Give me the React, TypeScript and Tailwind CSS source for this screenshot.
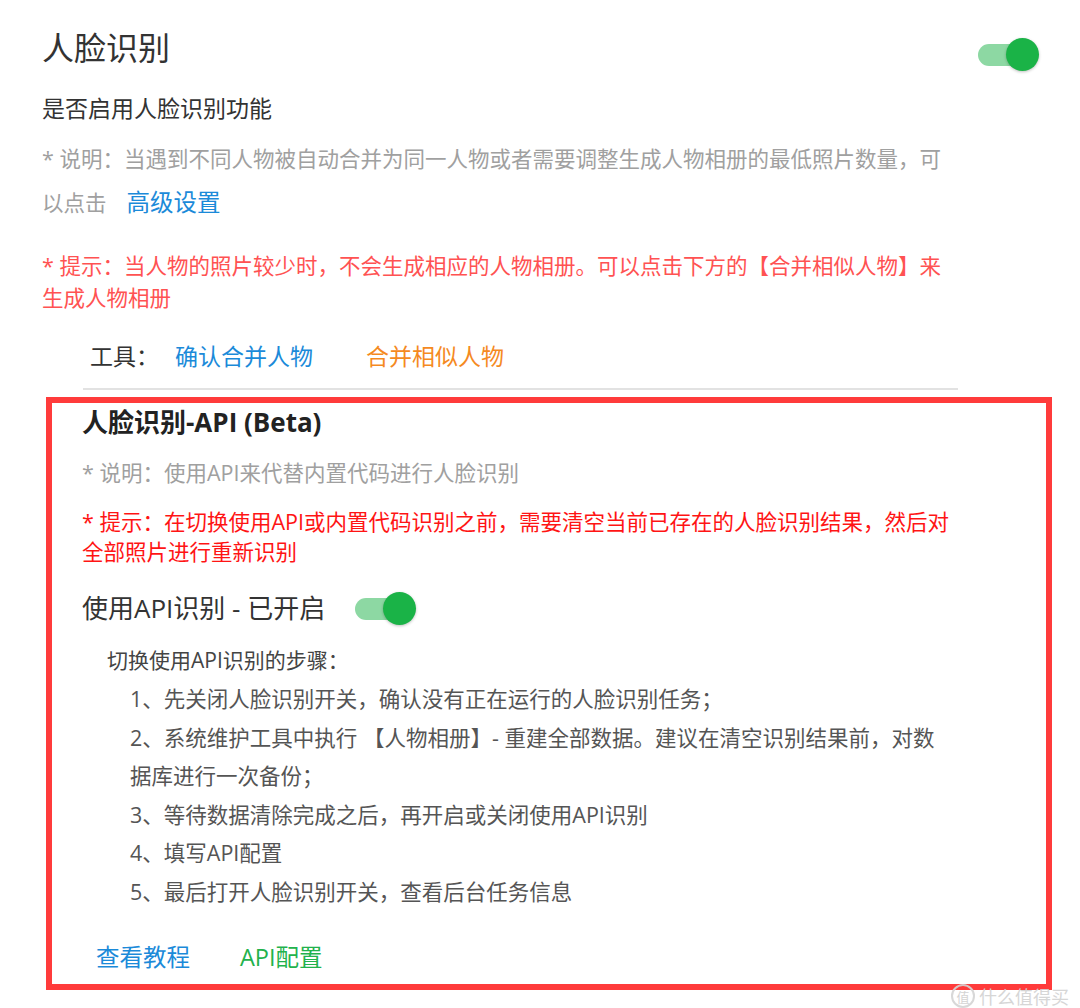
import React from "react";

function Toggle() {
  return (
    <div className="relative w-[61px] h-[33px] shrink-0">
      <div className="absolute left-0 top-[6px] w-[44px] h-[22px] rounded-full bg-[#8dd8a3]" />
      <div className="absolute right-0 top-0 w-[33px] h-[33px] rounded-full bg-[#1ab347] shadow-[0_1px_3px_rgba(0,0,0,0.25)]" />
    </div>
  );
}

export default function App() {
  return (
    <div className="relative w-[1080px] h-[1008px] bg-white overflow-hidden font-['Open_Sans','Noto_Sans_CJK_SC',sans-serif]">
      <div className="pl-[42px] pt-[28px]">
        {/* Header */}
        <div className="flex w-[997px] justify-between items-start">
          <h1 className="text-[32px] leading-[40px] text-[#333] font-normal">人脸识别</h1>
          <div className="mt-[10px]">
            <Toggle />
          </div>
        </div>

        <div className="mt-[22px] text-[23px] leading-[30px] text-[#333]">是否启用人脸识别功能</div>

        <div className="mt-[14px] w-[912px] text-[21.5px] text-[#a0a0a0]">
          <div className="leading-[44px]">
            * 说明：当遇到不同人物被自动合并为同一人物或者需要调整生成人物相册的最低照片数量，可
          </div>
          <div className="flex items-center h-[44px]">
            <span>以点击</span>
            <span className="ml-[20px] text-[23.5px] text-[#1b8ad9]">高级设置</span>
          </div>
        </div>

        <p className="mt-[25px] w-[912px] text-[21.5px] leading-[32px] text-[#ff5252]">
          * 提示：当人物的照片较少时，不会生成相应的人物相册。可以点击下方的【合并相似人物】来生成人物相册
        </p>

        <div className="mt-[26px] ml-[48px] flex items-center text-[23px] leading-[32px]">
          <span className="text-[#333]">工具：</span>
          <span className="ml-[16px] text-[#1b8ad9]">确认合并人物</span>
          <span className="ml-[53px] text-[#f58a1f]">合并相似人物</span>
        </div>

        <div className="mt-[16px] ml-[41px] w-[875px] border-t-2 border-[#e2e2e2]" />

        {/* API box */}
        <div className="mt-[7px] ml-[4px] w-[1006px] h-[593px] border-[6px] border-[#ff3b3b] pl-[30px] pt-[3px]">
          <div className="text-[26px] leading-[32px] font-bold text-[#222]">人脸识别-API (Beta)</div>

          <p className="mt-[19px] text-[21.5px] leading-[32px] text-[#a0a0a0]">
            * 说明：使用API来代替内置代码进行人脸识别
          </p>

          <p className="mt-[18px] w-[875px] text-[21.5px] leading-[30px] text-[#ff1414]">
            * 提示：在切换使用API或内置代码识别之前，需要清空当前已存在的人脸识别结果，然后对全部照片进行重新识别
          </p>

          <div className="mt-[24px] flex items-center">
            <span className="text-[26px] leading-[34px] text-[#333]">使用API识别 - 已开启</span>
            <div className="ml-[30px]">
              <Toggle />
            </div>
          </div>

          <div className="mt-[20px] pl-[25px] text-[21px] leading-[30px] text-[#444]">
            切换使用API识别的步骤：
          </div>

          <div className="mt-[5px] pl-[48px] w-[860px] text-[21.5px] leading-[38.5px] text-[#555]">
            <div className="w-[812px]">1、先关闭人脸识别开关，确认没有正在运行的人脸识别任务；</div>
            <div className="w-[812px]">
              2、系统维护工具中执行 【人物相册】- 重建全部数据。建议在清空识别结果前，对数据库进行一次备份；
            </div>
            <div className="w-[812px]">3、等待数据清除完成之后，再开启或关闭使用API识别</div>
            <div className="w-[812px]">4、填写API配置</div>
            <div className="w-[812px]">5、最后打开人脸识别开关，查看后台任务信息</div>
          </div>

          <div className="mt-[30px] pl-[14px] flex items-center text-[23.5px] leading-[32px]">
            <span className="text-[#1b8ad9]">查看教程</span>
            <span className="ml-[50px] text-[#22b24c]">API配置</span>
          </div>
        </div>
      </div>

      {/* watermark */}
      <div className="absolute left-[951px] top-[984px] flex items-center gap-[4px] opacity-90">
        <div className="w-[24px] h-[24px] rounded-full border-2 border-[#d4d4d4] flex items-center justify-center text-[13px] leading-none text-[#cfcfcf] font-['Noto_Sans_CJK_SC',sans-serif]">
          值
        </div>
        <span className="text-[18px] leading-[24px] text-[#d2d2d2] font-['Noto_Sans_CJK_SC',sans-serif]">什么值得买</span>
      </div>
    </div>
  );
}
